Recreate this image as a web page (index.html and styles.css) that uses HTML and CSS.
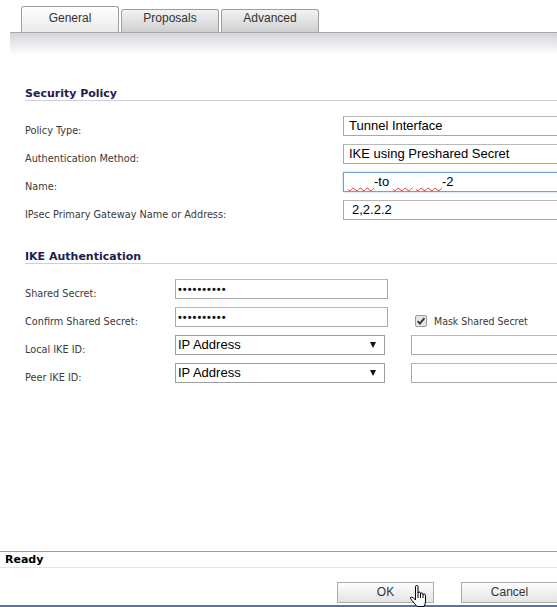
FILE: index.html
```html
<!DOCTYPE html>
<html>
<head>
<meta charset="utf-8">
<link rel="stylesheet" href="styles.css">
</head>
<body>
<div class="page">
  <div class="tabbar">
    <div class="tab active">General</div>
    <div class="tab">Proposals</div>
    <div class="tab">Advanced</div>
  </div>
  <div class="band"></div>
  <main class="content">
    <h2 class="section-title">Security Policy</h2>
    <div class="form form-policy">
      <div class="row"><label>Policy Type:</label><div class="field">Tunnel Interface</div></div>
      <div class="row"><label>Authentication Method:</label><div class="field">IKE using Preshared Secret</div></div>
      <div class="row"><label>Name:</label><div class="field focused"><span class="redact r1">xxxx</span>-to <span class="redact r2">xxx</span> <span class="redact r3">xxxx</span>-2</div></div>
      <div class="row"><label>IPsec Primary Gateway Name or Address:</label><div class="field gw">2,2.2.2</div></div>
    </div>
    <h2 class="section-title ike">IKE Authentication</h2>
    <div class="form form-ike">
      <div class="row"><label>Shared Secret:</label><div class="field pw">••••••••••</div></div>
      <div class="row"><label>Confirm Shared Secret:</label><div class="field pw">••••••••••</div>
        <div class="extra check">
          <svg class="cbox" width="12" height="12" viewBox="0 0 12 12"><rect x="0.5" y="0.5" width="11" height="11" rx="1.5" fill="#e6e6e6" stroke="#9a9a9a"/><path d="M2.6 6.2 L4.9 8.6 L9.4 3.2" fill="none" stroke="#333" stroke-width="1.8"/></svg>
          <span class="check-label">Mask Shared Secret</span>
        </div>
      </div>
      <div class="row"><label>Local IKE ID:</label><div class="select"><span>IP Address</span><span class="arrow"></span></div><div class="extra"><div class="field wide"></div></div></div>
      <div class="row"><label>Peer IKE ID:</label><div class="select"><span>IP Address</span><span class="arrow"></span></div><div class="extra"><div class="field wide"></div></div></div>
    </div>
  </main>
  <footer class="footer">
    <div class="status">Ready</div>
    <div class="buttons">
      <div class="btn">OK</div>
      <div class="btn">Cancel</div>
    </div>
  </footer>
  <svg class="cursor" width="20" height="24" viewBox="0 0 20 24">
    <path d="M6.5,1.5 Q6.5,0.5 7.75,0.5 Q9,0.5 9,1.5 L9,8 Q9,7 10.25,7 Q11.5,7 11.5,8.5 L11.5,9 Q11.5,8 12.75,8 Q14,8 14,9.5 L14,10 Q14,9 15.25,9 Q16.5,9 16.5,10.5 L16.5,16 Q16.5,19 15,21.5 L8,21.5 Q6,19 3,15.5 Q1,13.5 1.5,12.5 Q2.5,11.5 4.5,13 L6.5,15 Z" fill="#fff" stroke="#000" stroke-width="1"/>
    <path d="M9,8 L9,13 M11.5,9 L11.5,13 M14,10 L14,13" fill="none" stroke="#000" stroke-width="1"/>
  </svg>
</div>
</body>
</html>
```

FILE: styles.css
```css
* { box-sizing: border-box; }
html, body { margin: 0; padding: 0; background: #fff; }
body {
  width: 557px;
  height: 607px;
  overflow: hidden;
  font-family: "DejaVu Sans Condensed", "DejaVu Sans", sans-serif;
}
.page {
  position: relative;
  height: 607px;
  display: flex;
  flex-direction: column;
}
.tabbar {
  display: flex;
  align-items: flex-end;
  gap: 2px;
  height: 33px;
  margin-left: 10px;
  padding-left: 11px;
  border-bottom: 1px solid #a9a9a9;
}
.tab {
  width: 98px;
  height: 23px;
  border: 1px solid #9d9d9d;
  border-bottom: none;
  border-radius: 3px 3px 0 0;
  background: linear-gradient(#f3f3f3, #cfcfcf);
  font: 12px/16px "Liberation Sans", Arial, sans-serif;
  color: #333;
  text-align: center;
}
.tab.active {
  height: 26px;
  padding-top: 3px;
  background: linear-gradient(#ffffff, #e9e9e9);
}
.band {
  height: 22px;
  margin-left: 10px;
  background: linear-gradient(#d5d5d9, #ffffff);
}
.content {
  flex: 1;
  padding: 31px 0 0 25px;
}
.section-title {
  margin: 0;
  padding-top: 1px;
  font: bold 11px/13px "DejaVu Sans", sans-serif;
  color: #231b4d;
  border-bottom: 1px solid #c9d0da;
}
.section-title.ike { margin-top: 29px; }
.form {
  display: flex;
  flex-direction: column;
  gap: 8px;
  margin-top: 15px;
}
.row {
  display: flex;
  height: 20px;
}
.row label {
  padding-top: 8px;
  font-size: 10.8px;
  line-height: 13px;
  color: #3a3a3a;
  flex-shrink: 0;
  white-space: nowrap;
}
.form-policy label { width: 318px; }
.form-ike label { width: 150px; }
.field {
  height: 20px;
  width: 230px;
  flex-shrink: 0;
  border: 1px solid #a9a9a9;
  border-top-color: #b8b8b8;
  padding-left: 5px;
  font: 13px/18px "Liberation Sans", Arial, sans-serif;
  color: #000;
  white-space: nowrap;
  background: #fff;
}
.field.focused {
  border-color: #6ea2d8;
  box-shadow: 0 0 2px #a6c9ec;
  padding-left: 4px;
}
.redact {
  color: transparent;
  text-decoration: underline wavy #d33;
  text-decoration-thickness: 1px;
  text-underline-offset: 1px;
  text-decoration-skip-ink: none;
}
.field.gw { padding-left: 8px; }
.form-ike .field { width: 213px; padding-left: 2px; }
.field.pw {
  font: bold 11px/18px "Liberation Sans", Arial, sans-serif;
  letter-spacing: 1px;
  color: #111;
}
.form-ike .field.wide { width: 160px; }
.extra {
  margin-left: 23px;
  display: flex;
}
.select + .extra { margin-left: 26px; }
.check {
  padding-left: 4px;
  padding-top: 8px;
  gap: 7px;
  align-items: flex-start;
}
.cbox { flex-shrink: 0; }
.check-label {
  font-size: 10.5px;
  line-height: 12px;
  color: #3a3a3a;
  white-space: nowrap;
}
.select {
  width: 210px;
  height: 20px;
  flex-shrink: 0;
  border: 1px solid #9f9f9f;
  padding: 0 8px 0 2px;
  display: flex;
  justify-content: space-between;
  align-items: center;
  font: 13px/18px "Liberation Sans", Arial, sans-serif;
  color: #000;
}
.arrow {
  width: 0;
  height: 0;
  border-left: 3px solid transparent;
  border-right: 3px solid transparent;
  border-top: 6px solid #111;
}
.footer { flex-shrink: 0; }
.status {
  height: 17px;
  border-top: 1px solid #9c9c9c;
  border-bottom: 1px solid #e4e4e4;
  padding-left: 5px;
  font: bold 11px/15px "DejaVu Sans", sans-serif;
  color: #000;
}
.buttons {
  display: flex;
  gap: 27px;
  padding: 14px 0 2px 337px;
  border-bottom: 2px solid #5a7391;
}
.btn {
  width: 97px;
  height: 21px;
  flex-shrink: 0;
  border: 1px solid #ababab;
  background: linear-gradient(#fdfdfd, #e4e4e4);
  font: 12px/19px "Liberation Sans", Arial, sans-serif;
  color: #333;
  text-align: center;
}
.cursor {
  position: absolute;
  left: 409px;
  top: 585px;
}
```
